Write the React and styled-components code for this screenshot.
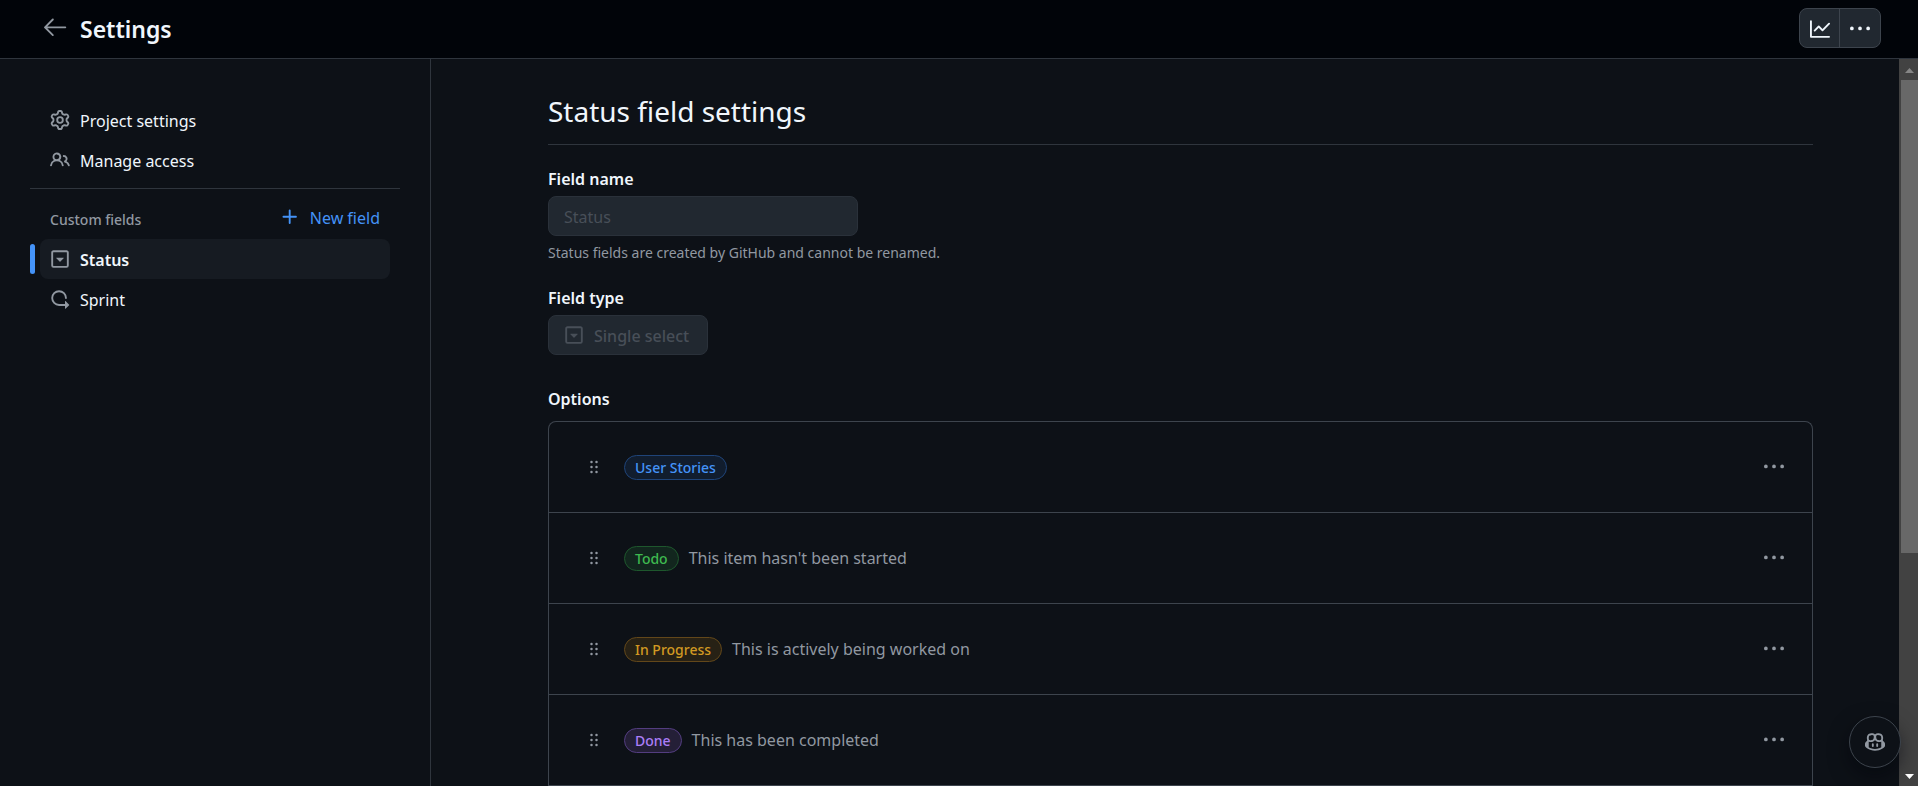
import React from "react";
import styled, { createGlobalStyle, css } from "styled-components";

const GlobalStyle = createGlobalStyle`
  *, *::before, *::after { box-sizing: border-box; }
  body {
    margin: 0;
    background: #0d1117;
    color: #f0f6fc;
    font-family: "Noto Sans", "Open Sans", sans-serif;
    font-size: 16px;
    line-height: 24px;
  }
  button, input { font: inherit; color: inherit; margin: 0; }
  h1, h2, h3, p, ul { margin: 0; padding: 0; }
  ul { list-style: none; }
`;

const paths = {
  arrowLeft:
    "M10.78 19.03a.75.75 0 0 1-1.06 0l-6.25-6.25a.75.75 0 0 1 0-1.06l6.25-6.25a.749.749 0 0 1 1.275.326.749.749 0 0 1-.215.734L5.81 11.5h14.44a.75.75 0 0 1 0 1.5H5.81l4.97 4.97a.75.75 0 0 1 0 1.06Z",
  gear: "M8 0a8.2 8.2 0 0 1 .701.031C9.444.095 9.99.645 10.16 1.29l.288 1.107c.018.066.079.158.212.224.231.114.454.243.668.386.123.082.233.09.299.071l1.103-.303c.644-.176 1.392.021 1.82.63.27.385.506.792.704 1.218.315.675.111 1.422-.364 1.891l-.814.806c-.049.048-.098.147-.088.294.016.257.016.515 0 .772-.01.147.038.246.088.294l.814.806c.475.469.679 1.216.364 1.891a7.977 7.977 0 0 1-.704 1.217c-.428.61-1.176.807-1.82.63l-1.102-.302c-.067-.019-.177-.011-.3.071a5.909 5.909 0 0 1-.668.386c-.133.066-.194.158-.211.224l-.29 1.106c-.168.646-.715 1.196-1.458 1.26a8.006 8.006 0 0 1-1.402 0c-.743-.064-1.289-.614-1.458-1.26l-.289-1.106c-.018-.066-.079-.158-.212-.224a5.738 5.738 0 0 1-.668-.386c-.123-.082-.233-.09-.299-.071l-1.103.303c-.644.176-1.392-.021-1.82-.63a8.12 8.12 0 0 1-.704-1.218c-.315-.675-.111-1.422.363-1.891l.815-.806c.05-.048.098-.147.088-.294a6.214 6.214 0 0 1 0-.772c.01-.147-.038-.246-.088-.294l-.815-.806C.635 6.045.431 5.298.746 4.623a7.92 7.92 0 0 1 .704-1.217c.428-.61 1.176-.807 1.82-.63l1.102.302c.067.019.177.011.3-.071.214-.143.437-.272.668-.386.133-.066.194-.158.211-.224l.29-1.106C6.009.645 6.556.095 7.299.03 7.53.01 7.764 0 8 0Zm-.571 1.525c-.036.003-.108.036-.137.146l-.289 1.105c-.147.561-.549.967-.998 1.189-.173.086-.34.183-.5.29-.417.278-.97.423-1.529.27l-1.103-.303c-.109-.03-.175.016-.195.045-.22.312-.412.644-.573.99-.014.031-.021.11.059.19l.815.806c.411.406.562.957.53 1.456a4.709 4.709 0 0 0 0 .582c.032.499-.119 1.05-.53 1.456l-.815.806c-.081.08-.073.159-.059.19.162.346.353.677.573.989.02.03.085.076.195.046l1.102-.303c.56-.153 1.113-.008 1.53.27.161.107.328.204.501.29.447.222.85.629.997 1.189l.289 1.105c.029.109.101.143.137.146a6.6 6.6 0 0 0 1.142 0c.036-.003.108-.036.137-.146l.289-1.105c.147-.561.549-.967.998-1.189.173-.086.34-.183.5-.29.417-.278.97-.423 1.529-.27l1.103.303c.109.029.175-.016.195-.045.22-.313.411-.644.573-.99.014-.031.021-.11-.059-.19l-.815-.806c-.411-.406-.562-.957-.53-1.456a4.709 4.709 0 0 0 0-.582c-.032-.499.119-1.05.53-1.456l.815-.806c.081-.08.073-.159.059-.19a6.464 6.464 0 0 0-.573-.989c-.02-.03-.085-.076-.195-.046l-1.102.303c-.56.153-1.113.008-1.53-.27a4.44 4.44 0 0 0-.501-.29c-.447-.222-.85-.629-.997-1.189l-.289-1.105c-.029-.11-.101-.143-.137-.146a6.6 6.6 0 0 0-1.142 0ZM11 8a3 3 0 1 1-6 0 3 3 0 0 1 6 0ZM9.5 8a1.5 1.5 0 1 0-3.001.001A1.5 1.5 0 0 0 9.5 8Z",
  people:
    "M2 5.5a3.5 3.5 0 1 1 5.898 2.549 5.508 5.508 0 0 1 3.034 4.084.75.75 0 1 1-1.482.235 4 4 0 0 0-7.9 0 .75.75 0 0 1-1.482-.236A5.507 5.507 0 0 1 3.102 8.05 3.493 3.493 0 0 1 2 5.5ZM11 4a3.001 3.001 0 0 1 2.22 5.018 5.01 5.01 0 0 1 2.56 3.012.749.749 0 0 1-.885.954.752.752 0 0 1-.549-.514 3.507 3.507 0 0 0-2.522-2.372.75.75 0 0 1-.574-.73v-.352a.75.75 0 0 1 .416-.672A1.5 1.5 0 0 0 11 5.5.75.75 0 0 1 11 4Zm-5.5-.5a2 2 0 1 0-.001 3.999A2 2 0 0 0 5.5 3.5Z",
  singleSelect:
    "m5.06 7.356 2.795 2.833c.08.081.21.081.29 0l2.794-2.833c.13-.131.038-.356-.145-.356H5.206c-.183 0-.275.225-.146.356ZM1 2.75C1 1.784 1.784 1 2.75 1h10.5c.966 0 1.75.784 1.75 1.75v10.5A1.75 1.75 0 0 1 13.25 15H2.75A1.75 1.75 0 0 1 1 13.25Zm1.75-.25a.25.25 0 0 0-.25.25v10.5c0 .138.112.25.25.25h10.5a.25.25 0 0 0 .25-.25V2.75a.25.25 0 0 0-.25-.25Z",
  iterations:
    "M2.5 7.25a4.75 4.75 0 0 1 9.5 0 .75.75 0 0 0 1.5 0 6.25 6.25 0 1 0-6.25 6.25H12v2.146c0 .223.27.335.427.177l2.896-2.896a.25.25 0 0 0 0-.354l-2.896-2.896a.25.25 0 0 0-.427.177V12H7.25A4.75 4.75 0 0 1 2.5 7.25Z",
  graph:
    "M1.5 1.75V13.5h13.75a.75.75 0 0 1 0 1.5H.75a.75.75 0 0 1-.75-.75V1.75a.75.75 0 0 1 1.5 0Zm14.28 2.53-5.25 5.25a.75.75 0 0 1-1.06 0L7 7.06 4.28 9.78a.751.751 0 0 1-1.042-.018.751.751 0 0 1-.018-1.042l3.25-3.25a.75.75 0 0 1 1.06 0L10 7.94l4.72-4.72a.751.751 0 0 1 1.042.018.751.751 0 0 1 .018 1.042Z",
  kebab:
    "M8 9a1.5 1.5 0 1 0 0-3 1.5 1.5 0 0 0 0 3ZM1.5 9a1.5 1.5 0 1 0 0-3 1.5 1.5 0 0 0 0 3Zm13 0a1.5 1.5 0 1 0 0-3 1.5 1.5 0 0 0 0 3Z",
  plus: "M7.75 2a.75.75 0 0 1 .75.75V7h4.25a.75.75 0 0 1 0 1.5H8.5v4.25a.75.75 0 0 1-1.5 0V8.5H2.75a.75.75 0 0 1 0-1.5H7V2.75A.75.75 0 0 1 7.75 2Z",
  grabber:
    "M10 13a1 1 0 1 1 0-2 1 1 0 0 1 0 2Zm0-4a1 1 0 1 1 0-2 1 1 0 0 1 0 2Zm-4 4a1 1 0 1 1 0-2 1 1 0 0 1 0 2Zm0-4a1 1 0 1 1 0-2 1 1 0 0 1 0 2Zm4-4a1 1 0 1 1 0-2 1 1 0 0 1 0 2ZM6 5a1 1 0 1 1 0-2 1 1 0 0 1 0 2Z",
  copilot:
    "M7.998 15.035c-4.562 0-7.873-2.914-7.998-3.749V9.338c.085-.628.677-1.686 1.588-2.065.013-.07.024-.143.036-.218.029-.183.06-.384.126-.612-.201-.508-.254-1.084-.254-1.656 0-.87.128-1.769.693-2.484.579-.733 1.494-1.124 2.724-1.261 1.206-.134 2.262.034 2.944.765.05.053.096.108.139.165.044-.057.094-.112.143-.165.682-.731 1.738-.899 2.944-.765 1.23.137 2.145.528 2.724 1.261.566.715.693 1.614.693 2.484 0 .572-.053 1.148-.254 1.656.066.228.098.429.126.612.012.076.024.148.037.218.924.385 1.522 1.471 1.591 2.095v1.872c0 .766-3.351 3.795-8.002 3.795Zm0-1.485c2.28 0 4.584-1.11 5.002-1.433V7.862l-.023-.116c-.49.21-1.075.291-1.727.291-1.146 0-2.059-.327-2.71-.991A3.222 3.222 0 0 1 8 6.303a3.24 3.24 0 0 1-.544.743c-.65.664-1.563.991-2.71.991-.652 0-1.236-.081-1.727-.291l-.023.116v4.255c.419.323 2.722 1.433 5.002 1.433ZM6.762 2.83c-.193-.206-.637-.413-1.682-.297-1.019.113-1.479.404-1.713.7-.247.312-.369.789-.369 1.554 0 .793.129 1.171.308 1.371.162.181.519.379 1.442.379.853 0 1.339-.235 1.638-.54.315-.322.527-.827.617-1.553.117-.935-.037-1.395-.241-1.614Zm4.155-.297c-1.044-.116-1.488.091-1.681.297-.204.219-.359.679-.242 1.614.091.726.303 1.231.618 1.553.299.305.784.54 1.638.54.922 0 1.28-.198 1.442-.379.179-.2.308-.578.308-1.371 0-.765-.123-1.242-.37-1.554-.233-.296-.693-.587-1.713-.7ZM6.25 9.037a.75.75 0 0 1 .75.75v1.501a.75.75 0 0 1-1.5 0V9.787a.75.75 0 0 1 .75-.75Zm4.25.75v1.501a.75.75 0 0 1-1.5 0V9.787a.75.75 0 0 1 1.5 0Z",
};

const Svg = styled.svg`
  display: block;
  flex: none;
  fill: currentColor;
`;

function Icon({ name, size = 20, grid = 16 }) {
  return (
    <Svg width={size} height={size} viewBox={`0 0 ${grid} ${grid}`} aria-hidden="true">
      <path d={paths[name]} />
    </Svg>
  );
}

const Page = styled.div`
  display: flex;
  flex-direction: column;
  height: 100vh;
  overflow: hidden;
`;

const Header = styled.header`
  display: flex;
  align-items: center;
  justify-content: space-between;
  flex: none;
  padding: 8px 37px 10px 40px;
  background: #010409;
  border-bottom: 1px solid #2f353d;
`;

const HeaderStart = styled.div`
  display: flex;
  align-items: center;
  gap: 10px;
`;

const BackLink = styled.a`
  padding-bottom: 2px;
  color: #9198a1;
`;

const Title = styled.h1`
  padding-top: 2px;
  font-size: 23px;
  line-height: 38px;
  font-weight: 600;
`;

const ButtonGroup = styled.div`
  display: flex;
  border: 1px solid #3d444d;
  border-radius: 8px;
  background: #212830;
`;

const GroupButton = styled.button`
  display: grid;
  place-items: center;
  width: 39px;
  height: 38px;
  padding: 2px 0 0;
  border: 0;
  background: none;

  & + & {
    width: 41px;
    border-left: 1px solid #3d444d;
  }
`;

const Body = styled.div`
  display: flex;
  flex: 1;
  min-height: 0;
`;

const Sidebar = styled.nav`
  flex: none;
  width: 431px;
  padding: 41px 30px 0;
  border-right: 1px solid #2f353d;
`;

const NavList = styled.ul`
  display: flex;
  flex-direction: column;
`;

const NavItem = styled.li`
  position: relative;
  padding: 0 10px;
`;

const NavLink = styled.a`
  display: flex;
  align-items: center;
  gap: 10px;
  height: 40px;
  padding: 0 10px;
  border-radius: 8px;
  color: #f0f6fc;
  text-decoration: none;

  svg { color: #9198a1; }

  ${(p) =>
    p.$current &&
    css`
      background: #161b22;
      font-weight: 600;

      &::before {
        content: "";
        position: absolute;
        left: 0;
        top: 5px;
        width: 5px;
        height: 30px;
        border-radius: 8px;
        background: #4493f8;
      }
    `}
`;

const ControlLabel = styled.span`
  padding-top: 2px;
`;

const Divider = styled.hr`
  height: 1px;
  margin: 8px 0;
  border: 0;
  background: #2f353d;
`;

const GroupHeader = styled.div`
  display: flex;
  align-items: center;
  justify-content: space-between;
  height: 42px;
  padding: 0 20px;
`;

const GroupTitle = styled.h3`
  padding-top: 4px;
  color: #9198a1;
  font-size: 14px;
  font-weight: 500;
`;

const NewFieldButton = styled.button`
  display: flex;
  align-items: center;
  gap: 10px;
  padding: 0 0 2px;
  border: 0;
  background: none;
  color: #4493f8;
`;

const Main = styled.main`
  flex: 1;
  min-width: 0;
  padding: 30px 86px 0 117px;
  overflow: hidden;
`;

const Heading = styled.h2`
  padding-bottom: 10px;
  border-bottom: 1px solid #2f353d;
  font-size: 28px;
  line-height: 45px;
  font-weight: 400;
`;

const Field = styled.div`
  display: flex;
  flex-direction: column;
  align-items: flex-start;
  margin-top: 22px;
`;

const FieldLabel = styled.label`
  margin-bottom: 5px;
  font-weight: 600;
`;

const disabledBox = css`
  height: 40px;
  border: 1px solid #2a313a;
  border-radius: 8px;
  background: #212830;
  color: #484f58;
`;

const TextInput = styled.input`
  ${disabledBox}
  width: 310px;
  padding: 2px 15px 0;

  &::placeholder { color: #484f58; opacity: 1; }
`;

const Hint = styled.p`
  margin-top: 5px;
  color: #9198a1;
  font-size: 14px;
  line-height: 23px;
`;

const TypeButton = styled.button`
  ${disabledBox}
  display: flex;
  align-items: center;
  gap: 10px;
  min-width: 160px;
  padding: 0 15px;
  font-weight: 500;
`;

const OptionsTitle = styled.h3`
  margin: 32px 0 10px;
  font-size: 16px;
  font-weight: 600;
`;

const OptionList = styled.ul`
  border: 1px solid #3d444d;
  border-bottom: 0;
  border-radius: 8px 8px 0 0;
`;

const OptionRow = styled.li`
  display: flex;
  align-items: center;
  height: 91px;
  padding: 0 28px 0 35px;
  border-bottom: 1px solid #3d444d;
  color: #9198a1;
`;

const Handle = styled.span`
  margin-right: 20px;
`;

const tones = {
  blue: ["#4493f8", "#111d2e", "#1f4479"],
  green: ["#3fb950", "#12261e", "#1e572d"],
  amber: ["#d29922", "#272115", "#62471a"],
  purple: ["#ab7df8", "#241f37", "#533d80"],
};

const Chip = styled.span`
  padding: 0 10px;
  border: 1px solid ${(p) => tones[p.$tone][2]};
  border-radius: 13px;
  background: ${(p) => tones[p.$tone][1]};
  color: ${(p) => tones[p.$tone][0]};
  font-size: 14px;
  line-height: 23px;
  font-weight: 500;
`;

const Description = styled.span`
  margin-left: 10px;
`;

const RowMenu = styled.button`
  margin-left: auto;
  padding: 0;
  border: 0;
  background: none;
  color: #9198a1;
`;

const ScrollTrack = styled.div`
  display: flex;
  flex-direction: column;
  flex: none;
  width: 19px;
  padding-left: 2px;
  background: #424242;
`;

const ScrollArrow = styled.span`
  display: grid;
  place-items: center;
  flex: none;
  height: 21px;
  padding-top: 2px;
  color: ${(p) => (p.$active ? "#ffffff" : "#868686")};
`;

const ScrollRail = styled.div`
  flex: 1;
`;

const ScrollThumb = styled.div`
  height: 69%;
  background: #686868;
`;

const CopilotButton = styled.button`
  position: fixed;
  right: 17px;
  bottom: 18px;
  display: grid;
  place-items: center;
  width: 52px;
  height: 52px;
  padding: 0;
  border: 1px solid #3d444d;
  border-radius: 50%;
  background: #0d1117;
  color: #9198a1;
  box-shadow: 0 8px 20px rgba(1, 4, 9, 0.5);
`;

const options = [
  { name: "User Stories", tone: "blue" },
  { name: "Todo", tone: "green", description: "This item hasn't been started" },
  { name: "In Progress", tone: "amber", description: "This is actively being worked on" },
  { name: "Done", tone: "purple", description: "This has been completed" },
];

function NavEntry({ icon, label, current }) {
  return (
    <NavItem>
      <NavLink href="#" $current={current} aria-current={current ? "page" : undefined}>
        <Icon name={icon} />
        <ControlLabel>{label}</ControlLabel>
      </NavLink>
    </NavItem>
  );
}

export default function App() {
  return (
    <>
      <GlobalStyle />
      <Page>
        <Header>
          <HeaderStart>
            <BackLink href="#" aria-label="Back">
              <Icon name="arrowLeft" size={30} grid={24} />
            </BackLink>
            <Title>Settings</Title>
          </HeaderStart>
          <ButtonGroup>
            <GroupButton type="button" aria-label="Insights">
              <Icon name="graph" />
            </GroupButton>
            <GroupButton type="button" aria-label="More options">
              <Icon name="kebab" />
            </GroupButton>
          </ButtonGroup>
        </Header>
        <Body>
          <Sidebar>
            <NavList>
              <NavEntry icon="gear" label="Project settings" />
              <NavEntry icon="people" label="Manage access" />
            </NavList>
            <Divider />
            <GroupHeader>
              <GroupTitle>Custom fields</GroupTitle>
              <NewFieldButton type="button">
                <Icon name="plus" />
                <ControlLabel>New field</ControlLabel>
              </NewFieldButton>
            </GroupHeader>
            <NavList>
              <NavEntry icon="singleSelect" label="Status" current />
              <NavEntry icon="iterations" label="Sprint" />
            </NavList>
          </Sidebar>
          <Main>
            <Heading>Status field settings</Heading>
            <Field>
              <FieldLabel htmlFor="field-name">Field name</FieldLabel>
              <TextInput id="field-name" placeholder="Status" disabled />
              <Hint>Status fields are created by GitHub and cannot be renamed.</Hint>
            </Field>
            <Field>
              <FieldLabel htmlFor="field-type">Field type</FieldLabel>
              <TypeButton id="field-type" type="button" disabled>
                <Icon name="singleSelect" />
                <ControlLabel>Single select</ControlLabel>
              </TypeButton>
            </Field>
            <OptionsTitle>Options</OptionsTitle>
            <OptionList>
              {options.map((option) => (
                <OptionRow key={option.name}>
                  <Handle>
                    <Icon name="grabber" />
                  </Handle>
                  <Chip $tone={option.tone}>{option.name}</Chip>
                  {option.description && <Description>{option.description}</Description>}
                  <RowMenu type="button" aria-label={`More options for ${option.name}`}>
                    <Icon name="kebab" />
                  </RowMenu>
                </OptionRow>
              ))}
            </OptionList>
          </Main>
          <ScrollTrack aria-hidden="true">
            <ScrollArrow>
              <Svg width="9" height="5" viewBox="0 0 9 5">
                <path d="M0 5 4.500 0 9 5Z" />
              </Svg>
            </ScrollArrow>
            <ScrollRail>
              <ScrollThumb />
            </ScrollRail>
            <ScrollArrow $active>
              <Svg width="9" height="5" viewBox="0 0 9 5">
                <path d="M0 0 4.500 5 9 0Z" />
              </Svg>
            </ScrollArrow>
          </ScrollTrack>
        </Body>
      </Page>
      <CopilotButton type="button" aria-label="Open Copilot">
        <Icon name="copilot" />
      </CopilotButton>
    </>
  );
}
